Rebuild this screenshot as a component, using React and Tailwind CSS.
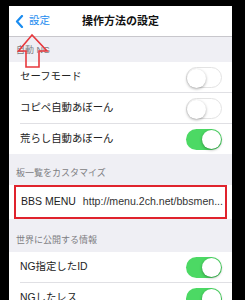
const FONT = { fontFamily: '"Liberation Sans", "Noto Sans CJK JP", sans-serif' }

function Toggle({ on }) {
  return (
    <div className={`w-[36px] h-[21px] rounded-full relative shrink-0 ${on ? 'bg-[#4cd964]' : 'bg-white border border-[#e3e3e3]'}`}>
      <div className={`absolute top-[1px] w-[19px] h-[19px] rounded-full bg-white shadow-[0_1px_3px_rgba(0,0,0,0.35)] ${on ? 'right-[1px]' : 'left-0 top-0'}`} />
    </div>
  )
}

function Row({ label, on, last }) {
  return (
    <div className="bg-white">
      <div className="h-[30px] flex items-center justify-between pl-[11px] pr-[10px] text-[10.4px] text-[#222]">
        <span>{label}</span>
        <Toggle on={on} />
      </div>
      {!last && <div className="ml-[11px] h-px bg-[#e0e0e4]" />}
    </div>
  )
}

function Header({ text, h }) {
  return (
    <div className={`${h} flex items-end pl-[7px] pb-[5px] text-[9px] text-[#7d7d82]`}>{text}</div>
  )
}

export default function App() {
  return (
    <div className="w-[245px] h-[300px] bg-black overflow-hidden" style={FONT}>
      <div className="ml-[9px] mt-[6px] w-[223px] h-[294px] bg-[#efeff4] relative overflow-hidden">
        {/* Nav */}
        <div className="h-[31px] bg-white border-b border-[#c8c7cc] relative flex items-center">
          <div className="flex items-center pl-[6px] text-[#1a8cf0] text-[10.5px]">
            <svg width="9" height="13" viewBox="0 0 9 13" className="mr-[5px]">
              <polyline points="7,1 2,6.5 7,12" fill="none" stroke="#1a8cf0" strokeWidth="2.2" strokeLinecap="round" strokeLinejoin="round" />
            </svg>
            <span>設定</span>
          </div>
          <div className="absolute inset-0 flex items-center justify-center text-[11px] font-bold text-[#111] pointer-events-none">操作方法の設定</div>
        </div>

        <Header text="自動 NG" h="h-[25px]" />
        <Row label="セーフモード" on={false} />
        <Row label="コピペ自動あぼーん" on={false} />
        <Row label="荒らし自動あぼーん" on={true} last />

        <Header text="板一覧をカスタマイズ" h="h-[31px]" />
        <div className="bg-white h-[34px] relative flex items-center pl-[12px] text-[10.5px] text-[#222] whitespace-nowrap">
          <span>BBS MENU</span>
          <span className="ml-[7px] text-[10.6px] text-[#333]">http://menu.2ch.net/bbsmen...</span>
          <div className="absolute left-[5px] right-[5px] top-0 bottom-0 border-2 border-[#e0232d]" />
        </div>

        <Header text="世界に公開する情報" h="h-[33px]" />
        <Row label="NG指定したID" on={true} />
        <Row label="NGしたレス" on={true} />

        {/* Red arrow annotation */}
        <svg className="absolute left-0 top-0" width="60" height="70" viewBox="0 0 60 70">
          <polygon points="23,29 9.5,45 17,45 17,61 30,61 30,45 38,45" fill="none" stroke="#e8383d" strokeWidth="1.6" strokeLinejoin="miter" />
        </svg>
      </div>
    </div>
  )
}
